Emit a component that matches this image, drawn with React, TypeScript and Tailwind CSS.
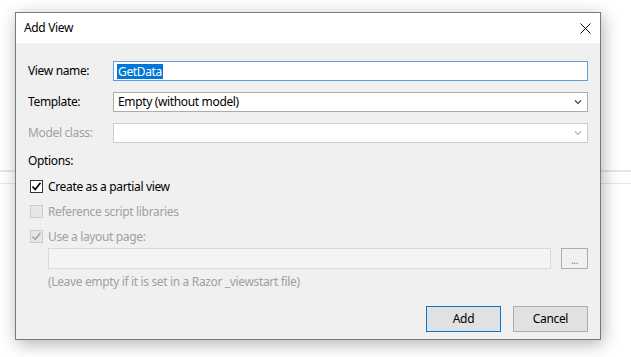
import React from "react";

const font = { fontFamily: '"Noto Sans", "Open Sans", sans-serif' };

const Chevron = ({ color }: { color: string }) => (
  <svg width="8" height="6" viewBox="0 0 8 6" className="shrink-0">
    <path d="M1 1.5 L4 4.5 L7 1.5" fill="none" stroke={color} strokeWidth="1.1" />
  </svg>
);

const Check = ({ color }: { color: string }) => (
  <svg width="11" height="11" viewBox="0 0 11 11">
    <path d="M1.5 5.5 L4.2 8.5 L9.5 1.8" fill="none" stroke={color} strokeWidth="1.7" />
  </svg>
);

export default function App() {
  return (
    <div className="relative w-[631px] h-[357px] bg-white overflow-hidden text-[12px] leading-[16px] tracking-[-0.35px] text-black" style={font}>
      {/* page content behind the dialog */}
      <div className="pt-[170px]">
        <div className="h-[14px] border-t-2 border-b border-[#e4e4ec]" />
      </div>

      <div className="absolute left-[15px] top-[12px] w-[586px] h-[328px] border border-[#7a7a7a] bg-[#f0f0f0] shadow-[2px_4px_16px_rgba(0,0,0,0.3)] flex flex-col">
        <div className="h-[30px] bg-white flex items-center justify-between pl-[8px] pr-[9px]">
          <span>Add View</span>
          <svg width="11" height="11" viewBox="0 0 11 11">
            <path d="M0.5 0.5 L10.5 10.5 M10.5 0.5 L0.5 10.5" stroke="#000" strokeWidth="1" />
          </svg>
        </div>

        <div className="flex-1 flex flex-col pl-[12px] pr-[12px] pt-[18px]">
          <div className="flex items-center h-[20px]">
            <span className="w-[85px]">View name:</span>
            <div className="flex-1 h-[20px] border border-[#5a9fe6] bg-white flex items-center pl-[3px]">
              <span className="bg-[#0078d7] text-white px-[1px] leading-[15px]">GetData</span>
            </div>
          </div>

          <div className="flex items-center h-[20px] mt-[11px]">
            <span className="w-[85px]">Template:</span>
            <div className="flex-1 h-[20px] border border-[#acacac] bg-white flex items-center justify-between pl-[4px] pr-[5px]">
              <span>Empty (without model)</span>
              <Chevron color="#404040" />
            </div>
          </div>

          <div className="flex items-center h-[20px] mt-[11px]">
            <span className="w-[85px] text-[#a0a0a0]">Model class:</span>
            <div className="flex-1 h-[20px] border border-[#cccccc] bg-white flex items-center justify-end pr-[5px]">
              <Chevron color="#b4b4b4" />
            </div>
          </div>

          <div className="mt-[10px] h-[16px]">Options:</div>

          <div className="flex flex-col mt-[11px] pl-[2px]">
            <div className="flex items-center h-[13px]">
              <div className="w-[13px] h-[13px] border border-[#333333] bg-white flex items-center justify-center">
                <Check color="#000" />
              </div>
              <span className="ml-[5px]">Create as a partial view</span>
            </div>
            <div className="flex items-center h-[13px] mt-[12px]">
              <div className="w-[13px] h-[13px] border border-[#cccccc] bg-[#e6e6e6]" />
              <span className="ml-[5px] text-[#a0a0a0]">Reference script libraries</span>
            </div>
            <div className="flex items-center h-[13px] mt-[12px]">
              <div className="w-[13px] h-[13px] border border-[#cccccc] bg-[#e6e6e6] flex items-center justify-center">
                <Check color="#a6a6a6" />
              </div>
              <span className="ml-[5px] text-[#a0a0a0]">Use a layout page:</span>
            </div>
          </div>

          <div className="flex items-center mt-[5px] pl-[20px] h-[21px]">
            <div className="flex-1 h-[21px] border border-[#d9d9d9] bg-[#f4f4f4]" />
            <div className="ml-[10px] w-[27px] h-[21px] border border-[#adadad] bg-[#f0f0f0] flex items-center justify-center text-[#7a7a7a] text-[10px] leading-[10px] pt-[3px]">
              ...
            </div>
          </div>

          <div className="pl-[20px] mt-[5px] text-[#a0a0a0]">(Leave empty if it is set in a Razor _viewstart file)</div>

          <div className="flex justify-end mt-[16px] gap-[12px]">
            <div className="w-[75px] h-[26px] border border-[#0078d7] bg-[#e1e1e1] flex items-center justify-center">Add</div>
            <div className="w-[75px] h-[26px] border border-[#adadad] bg-[#e1e1e1] flex items-center justify-center">Cancel</div>
          </div>
        </div>
      </div>
    </div>
  );
}
